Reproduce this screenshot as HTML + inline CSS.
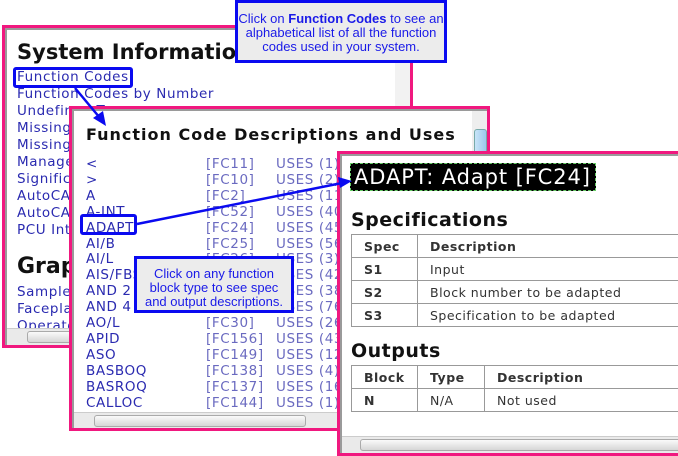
<!DOCTYPE html>
<html><head><style>
*{margin:0;padding:0;box-sizing:border-box}
body{width:678px;height:456px;background:#fff;position:relative;overflow:hidden;font-family:"DejaVu Sans","Liberation Sans",sans-serif}
.win{position:absolute;border:3px solid #f0187f;background:#fff;overflow:hidden}
.inner{position:absolute;left:0;top:0;right:0;bottom:0;border:2px solid #9a9a9a;border-right:none;border-bottom:none}
.t{position:absolute;white-space:nowrap}
.lk{color:#2a2ab0;font-size:13.5px;letter-spacing:0.6px}
.hs{position:absolute;height:17px;background:#eaeaea;border-top:1px solid #ccc}
.hs .th{position:absolute;top:2px;height:12px;background:linear-gradient(#fafafa,#d6d6d6);border:1px solid #aaa;border-radius:3px}
.call{position:absolute;background:#ececec;border:3px solid #0a0af0;color:#1a1ae8;font-family:"Liberation Sans",sans-serif;font-size:13px;text-align:center;line-height:14px;white-space:nowrap}
table{border-collapse:collapse;position:absolute;font-size:12.5px;color:#333}
td{border:1px solid #999;height:23px;padding-left:12px;letter-spacing:0.5px}
</style></head><body>

<!-- window 1 -->
<div class="win" style="left:2px;top:25px;width:411px;height:323px">
<div class="inner"></div>
<div class="t" style="left:12px;top:12px;font-size:21px;font-weight:bold;letter-spacing:0;color:#111">System Information</div>
<div class="t lk" style="left:12px;top:41px">Function Codes</div>
<div class="t lk" style="left:12px;top:58px">Function Codes by Number</div>
<div class="t lk" style="left:12px;top:75px">Undefined T</div>
<div class="t lk" style="left:12px;top:92px">Missing</div>
<div class="t lk" style="left:12px;top:109px">Missing</div>
<div class="t lk" style="left:12px;top:126px">Manage</div>
<div class="t lk" style="left:12px;top:143px">Significa</div>
<div class="t lk" style="left:12px;top:160px">AutoCA</div>
<div class="t lk" style="left:12px;top:177px">AutoCA</div>
<div class="t lk" style="left:12px;top:194px">PCU Int</div>
<div class="t" style="left:12px;top:226px;font-size:22px;font-weight:bold;color:#111">Graphics</div>
<div class="t lk" style="left:12px;top:256px">Sample</div>
<div class="t lk" style="left:12px;top:273px">Faceplate</div>
<div class="t lk" style="left:12px;top:290px">Operator</div>
<div class="hs" style="left:2px;top:300px;width:406px"><div class="th" style="left:20px;width:370px"></div></div>
<div style="position:absolute;left:390px;top:0;width:18px;height:300px;background:#f2f2f2"></div>
<div style="position:absolute;left:390px;top:270px;width:18px;height:12px;background:#ddd"></div>
</div>

<!-- window 2 -->
<div class="win" style="left:69px;top:106px;width:421px;height:325px">
<div class="inner"></div>
<div class="t" style="left:14px;top:16px;font-size:16px;font-weight:bold;letter-spacing:1px;color:#111">Function Code Descriptions and Uses</div>
<div style="position:absolute;left:400px;top:2px;width:17px;height:300px;background:#eee"></div>
<div style="position:absolute;left:402px;top:20px;width:13px;height:30px;background:linear-gradient(90deg,#c8e4f8,#9cc8ec);border:1px solid #7aa;border-radius:3px"></div>
<div id="rows"></div>
<div class="hs" style="left:2px;top:303px;width:416px"><div class="th" style="left:20px;width:212px"></div></div>
</div>

<!-- window 3 -->
<div class="win" style="left:337px;top:151px;width:345px;height:305px">
<div class="inner"></div>
<div class="t" style="left:10px;top:9px;width:246px;height:28px;border:1px dashed #6c6;background:#000;color:#fff;font-size:21px;letter-spacing:0.9px;padding-left:3px;line-height:26px">ADAPT: Adapt [FC24]</div>
<div class="t" style="left:11px;top:55px;font-size:19px;font-weight:bold;color:#111;letter-spacing:0.5px">Specifications</div>
<table style="left:11px;top:80px;width:340px">
<tr><td style="width:66px;font-weight:bold">Spec</td><td style="font-weight:bold">Description</td></tr>
<tr><td style="font-weight:bold">S1</td><td>Input</td></tr>
<tr><td style="font-weight:bold">S2</td><td>Block number to be adapted</td></tr>
<tr><td style="font-weight:bold">S3</td><td>Specification to be adapted</td></tr>
</table>
<div class="t" style="left:11px;top:186px;font-size:19px;font-weight:bold;color:#111;letter-spacing:0.5px">Outputs</div>
<table style="left:11px;top:211px;width:340px">
<tr><td style="width:66px;font-weight:bold">Block</td><td style="width:67px;font-weight:bold">Type</td><td style="font-weight:bold">Description</td></tr>
<tr><td style="font-weight:bold">N</td><td>N/A</td><td>Not used</td></tr>
</table>
<div class="hs" style="left:2px;top:282px;width:345px"><div class="th" style="left:18px;width:330px"></div></div>
</div>

<!-- callouts -->
<div class="call" style="left:235px;top:0;width:212px;height:63px;padding-top:9px">Click on <b>Function Codes</b> to see an<br>alphabetical list of all the function<br>codes used in your system.</div>
<div class="call" style="left:134px;top:256px;width:160px;height:57px;padding-top:8px">Click on any function<br>block type to see spec<br>and output descriptions.</div>

<!-- highlight boxes -->
<div style="position:absolute;left:13px;top:67px;width:120px;height:21px;border:3px solid #0a0af0;border-radius:3px"></div>
<div style="position:absolute;left:80px;top:214px;width:57px;height:21px;border:3px solid #0a0af0;border-radius:3px"></div>

<svg style="position:absolute;left:0;top:0" width="678" height="456">
<line x1="75" y1="88" x2="100" y2="118" stroke="#0a0af0" stroke-width="2.5"/>
<polygon points="106,126 93,118 103,111" fill="#0a0af0"/>
<line x1="137" y1="224" x2="342" y2="183" stroke="#0a0af0" stroke-width="2.5"/>
<polygon points="352,181 340,188 338,177" fill="#0a0af0"/>
</svg>

<script>
var d=[["&lt;","[FC11]","USES (1)"],["&gt;","[FC10]","USES (2)"],["A","[FC2]","USES (110)"],["A-INT","[FC52]","USES (40)"],["ADAPT","[FC24]","USES (45)"],["AI/B","[FC25]","USES (56)"],["AI/L","[FC26]","USES (3)"],["AIS/FBS","[FC27]","USES (42)"],["AND 2","[FC33]","USES (389)"],["AND 4","[FC34]","USES (76)"],["AO/L","[FC30]","USES (264)"],["APID","[FC156]","USES (43)"],["ASO","[FC149]","USES (12)"],["BASBOQ","[FC138]","USES (4)"],["BASROQ","[FC137]","USES (16)"],["CALLOC","[FC144]","USES (1)"]];
var h="";for(var i=0;i<d.length;i++){var y=47+i*15.9;
h+='<div class="t lk" style="left:14px;top:'+y+'px">'+d[i][0]+'</div><div class="t lk" style="left:134px;top:'+y+'px;color:#6a6ac0">'+d[i][1]+'</div><div class="t lk" style="left:204px;top:'+y+'px;color:#6a6ac0">'+d[i][2]+'</div>';}
document.getElementById("rows").innerHTML=h;
</script>
</body></html>
